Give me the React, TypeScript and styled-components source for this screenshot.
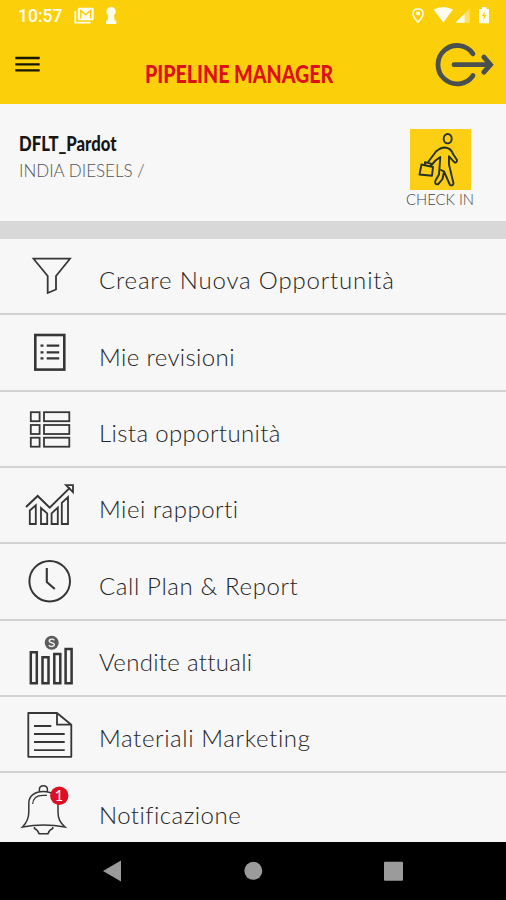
import React from 'react';
import styled, { createGlobalStyle } from 'styled-components';

const GlobalStyle = createGlobalStyle`
  *, *::before, *::after { box-sizing: border-box; }
  body { margin: 0; background: #000; font-family: Lato, "Open Sans", sans-serif; }
`;

const Screen = styled.div`
  width: 506px;
  height: 900px;
  display: flex;
  flex-direction: column;
  overflow: hidden;
  background: #f7f7f7;
`;

const Header = styled.header`
  height: 104px;
  flex: none;
  display: flex;
  flex-direction: column;
  background: #fccf0b;
`;

const StatusBar = styled.div`
  height: 32px;
  display: flex;
  align-items: center;
  justify-content: space-between;
  padding: 0 14px 0 18px;
  color: #fffdf0;
`;

const StatusGroup = styled.div`
  display: flex;
  align-items: center;
`;

const Clock = styled.span`
  width: 56px;
  font: 500 17.5px/32px Roboto, sans-serif;
`;

const TitleBar = styled.div`
  height: 72px;
  display: grid;
  grid-template-columns: 145px 1fr 76px;
`;

const IconButton = styled.button`
  display: block;
  padding: 0;
  border: 0;
  background: none;
`;

const Title = styled.h1`
  margin: 25px 0 0 -0.5px;
  font-size: 25px;
  line-height: 32px;
  font-weight: 900;
  color: #dd1017;
  white-space: nowrap;
  transform: scaleX(0.785);
  transform-origin: left;
`;

const Profile = styled.section`
  height: 117px;
  flex: none;
  display: flex;
  justify-content: space-between;
  padding: 24px 31px 0 19px;
`;

const Identity = styled.div`
  display: flex;
  flex-direction: column;
`;

const UserName = styled.div`
  margin-left: -0.5px;
  font-size: 21px;
  line-height: 30px;
  font-weight: 900;
  color: #161616;
  transform: scaleX(0.795);
  transform-origin: left;
`;

const Company = styled.div`
  font-size: 17px;
  line-height: 26px;
  font-weight: 300;
  color: #555;
`;

const CheckIn = styled.button`
  display: flex;
  flex-direction: column;
  align-items: center;
  width: 70px;
  padding: 0;
  border: 0;
  background: none;
  font: 300 14.8px/19px Lato, sans-serif;
  color: #444;
  white-space: nowrap;
`;

const CheckInTile = styled.span`
  display: flex;
  width: 61px;
  height: 61px;
  margin: 1px 0 0 1px;
  background: #fccf14;
`;

const Divider = styled.div`
  height: 18px;
  flex: none;
  background: #d8d8d8;
`;

const Menu = styled.nav`
  flex: 1;
  min-height: 0;
  overflow: hidden;
`;

const MenuItem = styled.div`
  height: 76.35px;
  display: flex;
  border-bottom: 2px solid #d2d2d2;
`;

const MenuIcon = styled.svg`
  width: 98px;
  height: 74px;
  flex: none;
  fill: none;
  stroke: #363636;
  stroke-width: 1.8;
`;

const MenuLabel = styled.span<{ $tracking: number }>`
  padding: 25.4px 0 0 1px;
  font-size: 24px;
  line-height: 32px;
  font-weight: 300;
  color: #262626;
  letter-spacing: ${(p) => p.$tracking}px;
  white-space: nowrap;
`;

const NavBar = styled.footer`
  height: 58px;
  flex: none;
  display: grid;
  grid-template-columns: 183px 140px 183px;
  background: #000;
`;

const NavIcon = styled.svg`
  width: 100%;
  height: 58px;
  fill: #9b9b9b;
`;

const Funnel = () => (
  <path d="M33.5 19.7H70L56 37V50.5L47.7 54V37Z" />
);

const Review = () => (
  <>
    <rect x="35.3" y="20" width="29" height="34.6" strokeWidth="2.6" />
    <path d="M40.5 30.7h3M46.7 30.7h12.5M40.5 37.3h3M46.7 37.3h12.5M40.5 43.3h3M46.7 43.3h12.5" strokeWidth="2.2" />
  </>
);

const OpportunityList = () => (
  <>
    {[20.2, 33, 45.7].map((y) => (
      <g key={y}>
        <rect x="30.8" y={y} width="8.8" height="9" />
        <rect x="44" y={y} width="25.3" height="9" />
      </g>
    ))}
  </>
);

const Trend = () => (
  <>
    <path d="M26 39 37.7 28 49.7 39.6 70 19.6" strokeWidth="2" />
    <path d="M66 17.2H73V24.2Z" />
    <path d="M29.8 56V42.5L35.8 37.3V56ZM41 56V40L47.2 45.3V56ZM51.6 56V45.3L57.8 39.6V56ZM61.8 56V34.8L68 29V56Z" />
  </>
);

const ClockFace = () => (
  <>
    <circle cx="49.7" cy="37.2" r="20.3" strokeWidth="2" />
    <path d="M46.8 24V38L54.8 45" strokeWidth="2.1" />
  </>
);

const Sales = () => (
  <>
    <path d="M30.8 31.3H36.8V62.3H30.8ZM42.5 36.3H48.5V62.3H42.5ZM54.3 33H60.3V62.3H54.3ZM65.6 28H71.6V62.3H65.6Z" strokeWidth="2.5" />
    <circle cx="51.7" cy="21.8" r="7" fill="#5c5c5c" stroke="none" />
    <path d="M54.3 19.3C53.2 17.6 49.2 17.8 49.2 20.1C49.2 22.4 54.3 21.2 54.3 23.6C54.3 26 49.9 26 48.9 24.1" stroke="#eee" strokeWidth="1.4" />
  </>
);

const Marketing = () => (
  <>
    <path d="M28.3 16H57L71.3 27.7V59.8H28.3ZM57 16V27.7H71.3" strokeLinejoin="round" />
    <path d="M34 29H51.3M34 37H64.7M34 45H64.7M34 53.2H64.7" />
  </>
);

const Bell = () => (
  <>
    <path d="M39.4 18.5V16.5C39.4 11.5 47.4 11.5 47.4 16.5V18.5M22.5 54C27 49.5 28.8 46 28.8 39V30C28.8 23 35 18.5 43.4 18.5S58 23 58 30V39C58 46 60 49.5 65 54Q43.5 50 22.5 54ZM34.5 54V55.5C36.5 56.3 38 57.3 39 60.8H48C49 57.3 50.7 56.3 52.7 55.5V54" strokeWidth="1.5" />
    <path d="M32.7 31C33 25 37.5 22.3 43 22.3H47" strokeWidth="1.2" />
    <circle cx="59.3" cy="22.8" r="9.2" fill="#dc1024" stroke="none" />
    <text x="59" y="28.2" textAnchor="middle" fontFamily="Lato, sans-serif" fontSize="14.5" fill="#fff" stroke="none">1</text>
  </>
);

const MENU = [
  { label: 'Creare Nuova Opportunità', tracking: 0.83, Icon: Funnel },
  { label: 'Mie revisioni', tracking: 0.38, Icon: Review },
  { label: 'Lista opportunità', tracking: 0.37, Icon: OpportunityList },
  { label: 'Miei rapporti', tracking: 0.5, Icon: Trend },
  { label: 'Call Plan & Report', tracking: 0.62, Icon: ClockFace },
  { label: 'Vendite attuali', tracking: 0.3, Icon: Sales },
  { label: 'Materiali Marketing', tracking: 0.62, Icon: Marketing },
  { label: 'Notificazione', tracking: 0.47, Icon: Bell },
];

const NotificationIcons = () => (
  <svg width="46" height="24" viewBox="74 4 46 24" fill="currentColor">
    <path d="M75.3 11V22.6H90.5" fill="none" stroke="currentColor" strokeWidth="1.8" />
    <rect x="77.7" y="7.7" width="16" height="12.5" rx="1.5" />
    <path d="M80.8 18.5V10.7L85.7 14.8 90.6 10.7V18.5" fill="none" stroke="#fccf0b" strokeWidth="1.5" />
    <path d="M108.2 15.2a4.7 4.7 0 1 1 5.8 0L114.7 20.5H116.3V24H106V20.5H107.5Z" />
  </svg>
);

const SignalIcons = () => (
  <svg width="82" height="24" viewBox="410 4 82 24" fill="currentColor">
    <path d="M418 9C415 9 413 11 413 13.7C413 17 418 22.2 418 22.2S423 17 423 13.7C423 11 421 9 418 9Z" fill="none" stroke="currentColor" strokeWidth="1.5" />
    <circle cx="418" cy="13.5" r="2" />
    <path d="M433.5 9.5Q443 4.5 453 9.5L443.3 22.5Z" />
    <path d="M455.5 22.8 469.7 8.5V22.8Z" opacity="0.4" />
    <path d="M455.5 22.8 464.5 13.8V22.8Z" />
    <path d="M479 9H482V7H486.5V9H489V23.3H479Z" />
    <path d="M484.9 11 481.7 16.3H483.8L483.3 20.5 486.4 15.1H484.3Z" fill="#fccf0b" />
  </svg>
);

const Walker = () => (
  <svg width="61" height="61" viewBox="410 129 61 61" fill="none" stroke="#26302c" strokeWidth="1.9" strokeLinejoin="round" strokeLinecap="round">
    <ellipse cx="447.7" cy="138.7" rx="4" ry="4.7" />
    <path d="M428.5 161.5 436 151.5Q440.5 147.5 445 147.5Q451 148 453 154L457 160Q457 163 454.5 162.3L449 156.3V164.5L453.5 183.5Q452.7 186.3 450 185L444 171.5 442.5 179 438 184.3Q434 184.5 435.5 180.5L439 174.5 440.3 157 435.5 160.5 432 164.5" />
    <path d="M441 170 444 171.5" />
    <path d="M421.5 164.5 433 167 432 175.7 419.5 174.5ZM425 165V162.2L431 163.7V166.5" />
  </svg>
);

export default function App() {
  return (
    <>
      <GlobalStyle />
      <Screen>
        <Header>
          <StatusBar>
            <StatusGroup>
              <Clock>10:57</Clock>
              <NotificationIcons />
            </StatusGroup>
            <SignalIcons />
          </StatusBar>
          <TitleBar>
            <IconButton aria-label="Menu">
              <svg width="145" height="72" viewBox="0 32 145 72" stroke="#171706" strokeWidth="2.3">
                <path d="M15.3 58H39.7M15.3 64.3H39.7M15.3 70.3H39.7" />
              </svg>
            </IconButton>
            <Title>PIPELINE MANAGER</Title>
            <IconButton aria-label="Logout">
              <svg width="76" height="72" viewBox="430 32 76 72" fill="none" stroke="#4a4f50" strokeWidth="4.8" strokeLinecap="round">
                <path d="M473 53.8A19.2 19.2 0 1 0 473 75.6" />
                <path d="M454 64.7H488" />
                <path d="M483.9 57.2 490.4 64.7 483.9 72.2" strokeWidth="5" strokeLinejoin="miter" />
              </svg>
            </IconButton>
          </TitleBar>
        </Header>
        <Profile>
          <Identity>
            <UserName>DFLT_Pardot</UserName>
            <Company>INDIA DIESELS /</Company>
          </Identity>
          <CheckIn>
            <CheckInTile>
              <Walker />
            </CheckInTile>
            CHECK IN
          </CheckIn>
        </Profile>
        <Divider />
        <Menu>
          {MENU.map(({ label, tracking, Icon }) => (
            <MenuItem key={label}>
              <MenuIcon viewBox="0 0 98 74">
                <Icon />
              </MenuIcon>
              <MenuLabel $tracking={tracking}>{label}</MenuLabel>
            </MenuItem>
          ))}
        </Menu>
        <NavBar>
          <NavIcon viewBox="0 842 183 58">
            <path d="M103 871 121 860.5V881.5Z" />
          </NavIcon>
          <NavIcon viewBox="183 842 140 58">
            <circle cx="253.3" cy="870.8" r="9" />
          </NavIcon>
          <NavIcon viewBox="323 842 183 58">
            <rect x="384" y="861.7" width="19" height="19" rx="1" />
          </NavIcon>
        </NavBar>
      </Screen>
    </>
  );
}
